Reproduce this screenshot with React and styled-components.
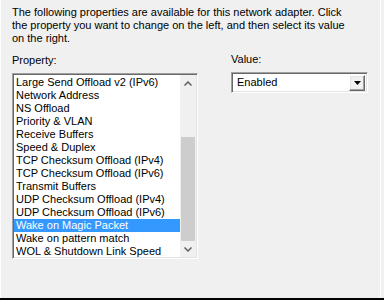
import React from "react";
import styled, { createGlobalStyle } from "styled-components";

const GlobalStyle = createGlobalStyle`
  html, body {
    margin: 0;
    padding: 0;
    background: #f0f0f0;
  }
  body {
    font-family: "Liberation Sans", Arial, sans-serif;
    font-size: 11px;
    color: #000;
  }
`;

const properties = [
  "Large Send Offload v2 (IPv6)",
  "Network Address",
  "NS Offload",
  "Priority & VLAN",
  "Receive Buffers",
  "Speed & Duplex",
  "TCP Checksum Offload (IPv4)",
  "TCP Checksum Offload (IPv6)",
  "Transmit Buffers",
  "UDP Checksum Offload (IPv4)",
  "UDP Checksum Offload (IPv6)",
  "Wake on Magic Packet",
  "Wake on pattern match",
  "WOL & Shutdown Link Speed",
];

function App() {
  return (
    <>
      <GlobalStyle />
      <StFrame>
        <StPage>
          <StDescription>
            The following properties are available for this network adapter. Click
            <br />
            the property you want to change on the left, and then select its value
            <br />
            on the right.
          </StDescription>
          <StColumns>
            <StLeft>
              <StLabel>Property:</StLabel>
              <StListBox>
                <StItems>
                  {properties.map((p) => (
                    <StItem key={p} selected={p === "Wake on Magic Packet"}>
                      {p}
                    </StItem>
                  ))}
                </StItems>
                <StScrollbar>
                  <StArrowBtn>
                    <svg width="8" height="5" viewBox="0 0 8 5">
                      <path d="M0.5 4.5 L4 1 L7.5 4.5" fill="none" stroke="#606060" strokeWidth="1.5" />
                    </svg>
                  </StArrowBtn>
                  <StTrack>
                    <StThumb />
                  </StTrack>
                  <StArrowBtn>
                    <svg width="8" height="5" viewBox="0 0 8 5">
                      <path d="M0.5 0.5 L4 4 L7.5 0.5" fill="none" stroke="#606060" strokeWidth="1.5" />
                    </svg>
                  </StArrowBtn>
                </StScrollbar>
              </StListBox>
            </StLeft>
            <StRight>
              <StLabel>Value:</StLabel>
              <StCombo>
                <StComboText>Enabled</StComboText>
                <StDropBtn>
                  <svg width="7" height="4" viewBox="0 0 7 4">
                    <path d="M0 0 H7 L3.5 4 Z" fill="#000" />
                  </svg>
                </StDropBtn>
              </StCombo>
            </StRight>
          </StColumns>
        </StPage>
        <StEdge />
      </StFrame>
    </>
  );
}

export default App;

const StFrame = styled.div`
  display: flex;
  width: 384px;
  height: 300px;
  box-sizing: border-box;
  border-bottom: 2px solid #000;
  background: #f0f0f0;
`;

const StPage = styled.div`
  width: 381px;
  box-sizing: border-box;
  border-left: 1px solid #fff;
  border-right: 1px solid #fff;
  padding: 6px 0 0 11px;
`;

const StEdge = styled.div`
  flex: 1;
  background: #f0f0f0;
`;

const StDescription = styled.div`
  line-height: 13px;
  white-space: nowrap;
`;

const StColumns = styled.div`
  display: flex;
  margin-top: 8px;
`;

const StLeft = styled.div`
  display: flex;
  flex-direction: column;
  width: 186px;
  padding-top: 1px;
`;

const StRight = styled.div`
  display: flex;
  flex-direction: column;
  margin-left: 33px;
`;

const StLabel = styled.div`
  line-height: 13px;
  height: 13px;
  margin-bottom: 6px;
`;

const StListBox = styled.div`
  display: flex;
  height: 186px;
  box-sizing: border-box;
  background: #fff;
  border-top: 1px solid #a0a0a0;
  border-left: 1px solid #a0a0a0;
  border-right: 1px solid #fff;
  border-bottom: 1px solid #fff;
  box-shadow: inset 1px 1px 0 #696969, inset -1px -1px 0 #e3e3e3;
  padding: 1px;
  overflow: hidden;
`;

const StItems = styled.div`
  flex: 1;
  padding-top: 1px;
  overflow: hidden;
`;

const StItem = styled.div`
  height: 13px;
  line-height: 13px;
  padding-left: 2px;
  white-space: nowrap;
  background: ${(props) => (props.selected ? "#3399ff" : "transparent")};
  color: ${(props) => (props.selected ? "#fff" : "#000")};
`;

const StScrollbar = styled.div`
  display: flex;
  flex-direction: column;
  width: 16px;
  background: #f0f0f0;
`;

const StArrowBtn = styled.div`
  height: 16px;
  display: flex;
  align-items: center;
  justify-content: center;
`;

const StTrack = styled.div`
  flex: 1;
  display: flex;
  flex-direction: column;
  justify-content: flex-end;
`;

const StThumb = styled.div`
  height: 104px;
  margin: 0 1px;
  background: #cdcdcd;
`;

const StCombo = styled.div`
  display: flex;
  align-items: center;
  width: 137px;
  height: 21px;
  box-sizing: border-box;
  background: #fff;
  border-top: 1px solid #a0a0a0;
  border-left: 1px solid #a0a0a0;
  border-right: 1px solid #fff;
  border-bottom: 1px solid #fff;
  box-shadow: inset 1px 1px 0 #696969, inset -1px -1px 0 #e3e3e3;
  padding: 2px;
`;

const StComboText = styled.div`
  flex: 1;
  padding-left: 3px;
  line-height: 13px;
`;

const StDropBtn = styled.div`
  width: 16px;
  height: 16px;
  box-sizing: border-box;
  display: flex;
  align-items: center;
  justify-content: center;
  background: #f0f0f0;
  border-top: 1px solid #fff;
  border-left: 1px solid #fff;
  border-right: 1px solid #696969;
  border-bottom: 1px solid #696969;
  box-shadow: inset -1px -1px 0 #a0a0a0, inset 1px 1px 0 #e3e3e3;
`;
